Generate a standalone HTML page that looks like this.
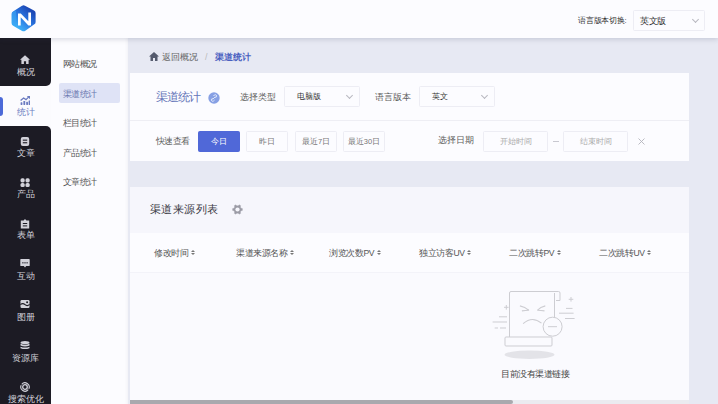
<!DOCTYPE html>
<html><head><meta charset="utf-8">
<style>
*{box-sizing:border-box;margin:0;padding:0}
html,body{width:718px;height:404px;overflow:hidden}
body{position:relative;background:#e7e9f3;font-family:"Liberation Sans",sans-serif;color:#333}
.a{position:absolute;white-space:nowrap}
.t{position:absolute;white-space:nowrap;line-height:1}
#hdr{position:absolute;left:0;top:0;width:718px;height:38px;background:#fcfcff;box-shadow:0 1.5px 5px rgba(50,55,90,.18);z-index:5}
#side{position:absolute;left:0;top:38px;width:51px;height:366px;background:#fbfbfe}
.dk{position:absolute;left:0;width:51px;background:#1c1b24}
.si{position:absolute;left:0;width:51px;text-align:center;color:#cfcfd6;font-size:8.5px;line-height:1}
.si svg{position:absolute;left:20px}
.si span{position:absolute;left:0;width:51px;text-align:center}
#sub{position:absolute;left:51px;top:38px;width:77px;height:366px;background:#fcfcff;box-shadow:inset -3px 0 3px -2px rgba(60,60,100,.06)}
.sm{position:absolute;left:12px;font-size:8.6px;letter-spacing:-0.57px;color:#555;line-height:1}
.card{position:absolute;left:130px;width:559px;background:#fcfcff}
.lbl{position:absolute;font-size:9px;color:#5c5c5c;line-height:1}
.sel{position:absolute;border:1px solid #ededf4;background:#fcfcff;border-radius:1.5px}
.sel span{position:absolute;font-size:7.9px;color:#333;line-height:1}
.chev{position:absolute;width:5px;height:5px;border-right:1px solid #b8b8c0;border-bottom:1px solid #b8b8c0;transform:rotate(45deg)}
.btn{position:absolute;top:131px;height:21px;width:42px;border:1px solid #ededf4;background:#fcfcff;border-radius:1.5px;font-size:7.5px;color:#777;text-align:center;line-height:19px}
.th{position:absolute;top:248.5px;font-size:8.6px;letter-spacing:-0.4px;color:#555;line-height:1}
.sort{display:inline-block;position:relative;width:4px;height:6px;margin-left:2.5px;vertical-align:0px}
.sort:before{content:"";position:absolute;left:0;top:0;border-left:2px solid transparent;border-right:2px solid transparent;border-bottom:2.5px solid #777}
.sort:after{content:"";position:absolute;left:0;top:3.5px;border-left:2px solid transparent;border-right:2px solid transparent;border-top:2.5px solid #777}
</style></head><body>

<div id="hdr">
  <svg class="a" style="left:10px;top:4px" width="28" height="29" viewBox="0 0 28 29">
    <defs><linearGradient id="lg" x1="0.15" y1="0.95" x2="0.85" y2="0.05"><stop offset="0" stop-color="#3db0f7"/><stop offset="0.5" stop-color="#2a78e2"/><stop offset="1" stop-color="#1c48b6"/></linearGradient></defs>
    <path d="M13.6 4.4 L22.6 9.1 L22.6 17.9 L13.6 24.3 L4.6 19.2 L4.6 10 Z" fill="url(#lg)" stroke="url(#lg)" stroke-width="6" stroke-linejoin="round"/>
    <path d="M1.8 10 Q1.8 8.6 3 8 L6 6.5 L6 22.5 L3 20.8 Q1.8 20.2 1.8 19 Z" fill="#3aa2f2" opacity="0.6"/>
    <path d="M8 21.5 V9.5 H10.8 L18.3 17.3 V8.5 H21 V21.5 H18.4 L10.7 13.2 V21.5 Z" fill="#fff"/>
  </svg>
  <div class="t" style="left:578px;top:16.5px;font-size:7.5px;letter-spacing:-0.25px;color:#333">语言版本切换:</div>
  <div class="sel" style="left:633px;top:10px;width:72px;height:21px"><span style="left:6px;top:6px;font-size:8.6px;letter-spacing:-0.5px">英文版</span><i class="chev" style="left:59px;top:6px"></i></div>
</div>

<div id="side">
  <div class="dk" style="top:0;height:47.5px;border-bottom-right-radius:5px"></div>
  <div class="dk" style="top:88px;height:278px;border-top-right-radius:5px"></div>
  <div style="position:absolute;left:0;top:59px;width:3px;height:19px;background:#4c6ad8;border-radius:0 3px 3px 0"></div>
</div>

<!-- side items -->
<svg class="a" style="left:20px;top:55.0px" width="10" height="10" viewBox="0 0 10 10"><path d="M5 0.2 L10 4.7 H8.6 V9 H6.1 V6.3 H3.9 V9 H1.4 V4.7 H0 Z" fill="#d2d2da"/></svg>
<div class="t" style="left:0;width:51px;text-align:center;top:67.7px;font-size:8.6px;color:#d2d2da">概况</div>
<svg class="a" style="left:20px;top:95.9px" width="10" height="10" viewBox="0 0 10 10"><g fill="#6b7bc0"><rect x="0.6" y="6.3" width="1.8" height="2.7" rx=".4"/><rect x="3.4" y="5" width="1.8" height="4" rx=".4"/><rect x="6.2" y="5.8" width="1.8" height="3.2" rx=".4"/><rect x="8.6" y="4.4" width="1.6" height="4.6" rx=".4"/><path d="M0.6 4.6 L3.6 2 L6 3.6 L8.8 0.9" stroke="#6b7bc0" stroke-width="1.3" fill="none"/><path d="M6.8 0 H10 V3.2 Z"/></g></svg>
<div class="t" style="left:0;width:51px;text-align:center;top:107.8px;font-size:8.6px;color:#6b7bc0">统计</div>
<svg class="a" style="left:20px;top:136.8px" width="10" height="10" viewBox="0 0 10 10"><rect x="0.8" y="0" width="8.4" height="9" rx="2" fill="#d2d2da"/><rect x="2.8" y="2.6" width="4.4" height="1.1" fill="#1c1b24"/><rect x="2.8" y="5.2" width="4.4" height="1.1" fill="#1c1b24"/></svg>
<div class="t" style="left:0;width:51px;text-align:center;top:149.4px;font-size:8.6px;color:#d2d2da">文章</div>
<svg class="a" style="left:20px;top:177.6px" width="10" height="10" viewBox="0 0 10 10"><g fill="#d2d2da"><rect x="0.5" y="0.3" width="4.2" height="4.1" rx="1.6"/><rect x="5.5" y="0.3" width="4.2" height="4.1" rx="1.6"/><rect x="0.5" y="5" width="4.2" height="4.1" rx="1.6"/><rect x="5.5" y="5" width="4.2" height="4.1" rx="1.6"/></g></svg>
<div class="t" style="left:0;width:51px;text-align:center;top:190.3px;font-size:8.6px;color:#d2d2da">产品</div>
<svg class="a" style="left:20px;top:218.5px" width="10" height="10" viewBox="0 0 10 10"><path d="M0.8 1.6 H3.6 L5 0 L6.4 1.6 H9.2 V9.4 H0.8 Z" fill="#d2d2da"/><rect x="2.8" y="4" width="4.4" height="1" fill="#1c1b24"/><rect x="2.8" y="6.4" width="4.4" height="1" fill="#1c1b24"/></svg>
<div class="t" style="left:0;width:51px;text-align:center;top:231.2px;font-size:8.6px;color:#d2d2da">表单</div>
<svg class="a" style="left:20px;top:259.4px" width="10" height="10" viewBox="0 0 10 10"><path d="M0.3 0.6 Q0.3 0 1 0 H9 Q9.7 0 9.7 0.6 V6.4 Q9.7 7 9 7 H6.2 L5 8.6 L3.8 7 H1 Q0.3 7 0.3 6.4 Z" fill="#d2d2da"/><g fill="#1c1b24"><rect x="2.3" y="3.2" width="1.2" height="1.2"/><rect x="4.4" y="3.2" width="1.2" height="1.2"/><rect x="6.5" y="3.2" width="1.2" height="1.2"/></g></svg>
<div class="t" style="left:0;width:51px;text-align:center;top:272.1px;font-size:8.6px;color:#d2d2da">互动</div>
<svg class="a" style="left:20px;top:300.2px" width="10" height="10" viewBox="0 0 10 10"><rect x="0.5" y="0" width="9" height="8" rx="1.2" fill="#d2d2da"/><path d="M0.3 4.6 Q2.8 2.6 5 4.6 T9.7 4.4" stroke="#1c1b24" stroke-width="1.1" fill="none"/><circle cx="7.1" cy="2.2" r="1" fill="#1c1b24"/></svg>
<div class="t" style="left:0;width:51px;text-align:center;top:312.9px;font-size:8.6px;color:#d2d2da">图册</div>
<svg class="a" style="left:20px;top:341.1px" width="10" height="10" viewBox="0 0 10 10"><g fill="#d2d2da"><ellipse cx="5" cy="1.6" rx="4.5" ry="1.6"/><path d="M0.5 2.8 Q5 4.6 9.5 2.8 V4.6 Q5 6.4 0.5 4.6 Z"/><path d="M0.5 5.7 Q5 7.5 9.5 5.7 V7.2 Q5 9 0.5 7.2 Z"/></g></svg>
<div class="t" style="left:0;width:51px;text-align:center;top:353.8px;font-size:8.6px;color:#d2d2da">资源库</div>
<svg class="a" style="left:20px;top:382.0px" width="10" height="10" viewBox="0 0 10 10"><g fill="none" stroke="#d2d2da" stroke-width="1.1"><path d="M1.78 2.30 A4.2 4.2 0 0 1 8.81 6.77"/><path d="M8.22 7.70 A4.2 4.2 0 0 1 1.19 3.23"/><circle cx="5" cy="5" r="2.3" stroke-width="1.3"/></g></svg>
<div class="t" style="left:0;width:51px;text-align:center;top:394.7px;font-size:8.6px;color:#d2d2da">搜索优化</div>

<div id="sub">
  <div class="sm" style="top:22px">网站概况</div>
  <div style="position:absolute;left:8px;top:45px;width:61px;height:20px;background:#dfe3f6;border-radius:2px"></div>
  <div class="sm" style="top:51.5px;color:#6b78b0">渠道统计</div>
  <div class="sm" style="top:81px">栏目统计</div>
  <div class="sm" style="top:111px">产品统计</div>
  <div class="sm" style="top:140px">文章统计</div>
</div>

<!-- breadcrumb -->
<svg class="a" style="left:149px;top:52px" width="10" height="9" viewBox="0 0 10 9"><path d="M5 0 L10 4.5 H8.5 V9 H6 V6 H4 V9 H1.5 V4.5 H0 Z" fill="#555b6e"/></svg>
<div class="t" style="left:162px;top:53px;font-size:9px;color:#666">返回概况</div>
<div class="t" style="left:205px;top:53px;font-size:9px;color:#bbb">/</div>
<div class="t" style="left:215px;top:53px;font-size:9px;color:#4a5fc0;font-weight:bold">渠道统计</div>

<!-- card 1 -->
<div class="card" style="top:73px;height:88px">
  <div style="position:absolute;left:0;top:47px;width:559px;height:1px;background:#eeeef4"></div>
</div>
<div class="t" style="left:156px;top:91px;font-size:11.6px;letter-spacing:-0.85px;color:#6474b8">渠道统计</div>
<svg class="a" style="left:208px;top:91.5px" width="12" height="12" viewBox="0 0 12 12"><circle cx="6" cy="6" r="5.7" fill="#87a0e4"/><path d="M4.6 7.4 L7.4 4.6 M5.4 4 L6.3 3.1 a1.3 1.3 0 0 1 1.9 1.9 L7.3 5.9 M6.6 8 L5.7 8.9 a1.3 1.3 0 0 1 -1.9 -1.9 L4.7 6.1" stroke="#e8eefc" stroke-width="0.9" fill="none"/></svg>
<div class="lbl" style="left:240px;top:93px">选择类型</div>
<div class="sel" style="left:284px;top:86px;width:76px;height:21px"><span style="left:12px;top:6px">电脑版</span><i class="chev" style="left:62px;top:6px"></i></div>
<div class="lbl" style="left:375px;top:93px">语言版本</div>
<div class="sel" style="left:419px;top:86px;width:76px;height:21px"><span style="left:12px;top:6px">英文</span><i class="chev" style="left:62px;top:6px"></i></div>

<div class="lbl" style="left:156px;top:137px;font-size:8.6px;letter-spacing:-0.55px">快速查看</div>
<div class="btn" style="left:198px;background:#5068d8;border-color:#5068d8;color:#fff">今日</div>
<div class="btn" style="left:246px">昨日</div>
<div class="btn" style="left:295px">最近7日</div>
<div class="btn" style="left:343px">最近30日</div>
<div class="lbl" style="left:438px;top:136px">选择日期</div>
<div class="btn" style="left:483px;width:65px;color:#aaa">开始时间</div>
<div class="a" style="left:552.5px;top:141px;width:6px;height:1px;background:#c8c8d0"></div>
<div class="btn" style="left:563px;width:65px;color:#aaa">结束时间</div>
<svg class="a" style="left:638px;top:138px" width="7" height="7" viewBox="0 0 7 7"><path d="M0.5 0.5 L6.5 6.5 M6.5 0.5 L0.5 6.5" stroke="#b4b4bc" stroke-width="0.9"/></svg>

<!-- card 2 -->
<div class="card" style="top:187px;height:217px">
  <div style="position:absolute;left:0;top:0;width:559px;height:46px;background:#f6f6fc"></div>
  <div style="position:absolute;left:0;top:85px;width:559px;height:132px;background:#fafafe;border-top:1px solid #f3f3f9"></div>
</div>
<div class="t" style="left:150px;top:204px;font-size:11.4px;letter-spacing:0.44px;color:#3a3a44">渠道来源列表</div>
<svg class="a" style="left:231.6px;top:204px" width="11" height="11" viewBox="0 0 11 11"><path d="M9.11 4.33 L10.41 4.55 L10.41 6.45 L9.11 6.67 L8.32 8.04 L8.78 9.27 L7.13 10.23 L6.29 9.22 L4.71 9.22 L3.87 10.23 L2.22 9.27 L2.68 8.04 L1.89 6.67 L0.59 6.45 L0.59 4.55 L1.89 4.33 L2.68 2.96 L2.22 1.73 L3.87 0.77 L4.71 1.78 L6.29 1.78 L7.13 0.77 L8.78 1.73 L8.32 2.96 Z" fill="#9c9ca6" stroke="#9c9ca6" stroke-width="0.3" stroke-linejoin="round"/><circle cx="5.5" cy="5.5" r="2.1" fill="#f6f6fc"/></svg>

<div class="th" style="left:154px">修改时间<i class="sort"></i></div>
<div class="th" style="left:236px">渠道来源名称<i class="sort"></i></div>
<div class="th" style="left:329px">浏览次数PV<i class="sort"></i></div>
<div class="th" style="left:419px">独立访客UV<i class="sort"></i></div>
<div class="th" style="left:509px">二次跳转PV<i class="sort"></i></div>
<div class="th" style="left:599px">二次跳转UV<i class="sort"></i></div>

<!-- empty -->
<svg class="a" style="left:480px;top:280px" width="110" height="85" viewBox="480 280 110 85">
  <ellipse cx="529.5" cy="354.7" rx="25" ry="4.2" fill="#e3e3e8"/>
  <g fill="none" stroke="#cdcdd2" stroke-width="1">
    <path d="M509.5 337 V293 a1.5 1.5 0 0 1 1.5 -1.5 H556"/>
    <path d="M554.5 293 V336"/>
    <path d="M555 291.5 H558.5 a1.5 1.5 0 0 1 1.5 1.5 V300.5 H556 "/>
    <rect x="505" y="337" width="47" height="9" rx="1"/>
    <path d="M519.9 305.9 Q525 307 529 310.3 M521.9 310.9 Q525.5 310.3 529 310.3 M545.3 305.9 Q540.5 307 537.3 310.3 M544.5 310.9 Q541 310.3 537.3 310.3" stroke-width="1.1"/>
    <path d="M523.1 323.6 Q532.4 315.5 541.5 323.2" stroke-width="1.1"/>
    <circle cx="552.6" cy="326.7" r="9.5" fill="#fafafe"/>
    <path d="M548 326.7 H557"/>
    <path d="M499 316.8 H507 M492.6 322 H507 M494.7 328 H498 M500 328 H506"/>
    <path d="M566 308.4 H572.5 M559 313.2 H573.6 M565 318.5 H574.6"/>
    <path d="M506.3 305 V309.6 M504 307.3 H508.6 M571 297 V301.6 M568.7 299.3 H573.3"/>
  </g>
</svg>
<div class="t" style="left:501px;top:369.5px;font-size:8.6px;letter-spacing:-0.5px;color:#444">目前没有渠道链接</div>

<!-- scrollbar -->
<div class="a" style="left:130px;top:400px;width:559px;height:4px;background:#ebebf0"></div>
<div class="a" style="left:130px;top:400px;width:383px;height:4px;background:#a9a9ae;border-radius:0 2px 2px 0"></div>

</body></html>
